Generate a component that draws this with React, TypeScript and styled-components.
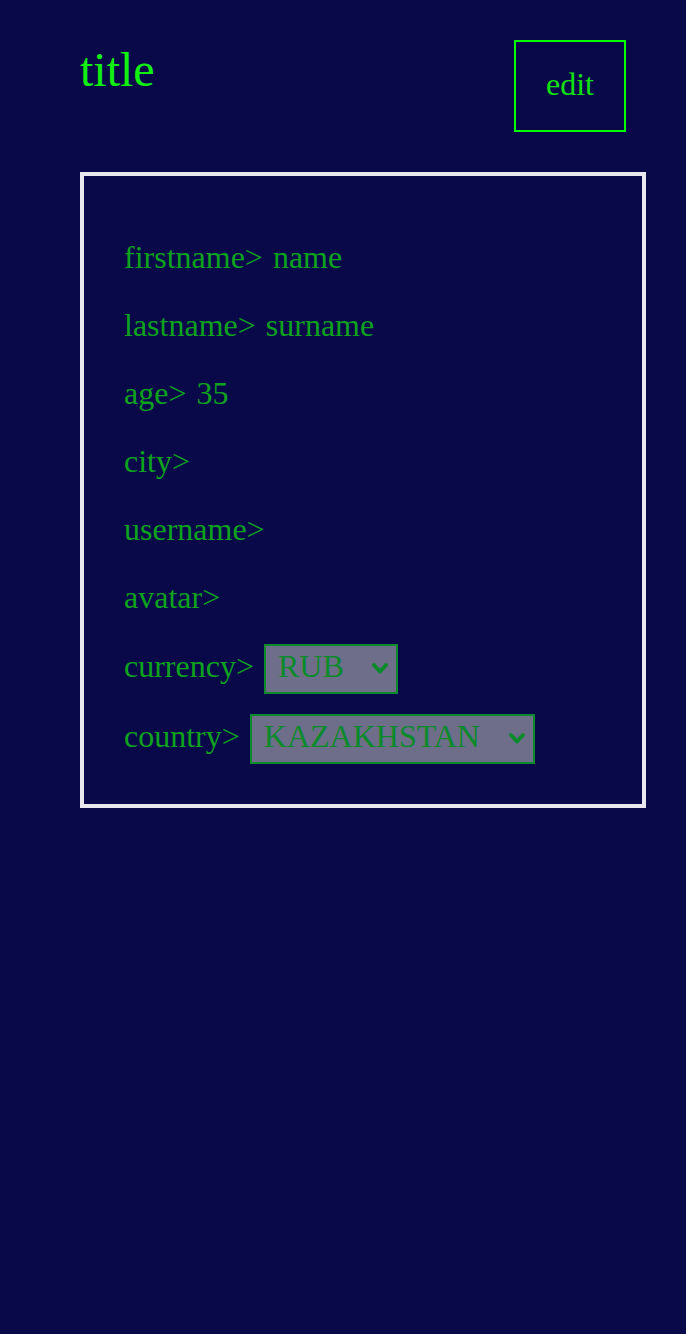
import * as React from 'react';
import styled, { createGlobalStyle } from 'styled-components';

const GlobalStyle = createGlobalStyle`
  html, body {
    margin: 0;
    padding: 0;
    background: #090949;
  }
  body {
    font-family: "Liberation Serif", "Times New Roman", serif;
  }
`;

const Page = styled.div`
  min-height: 1334px;
  padding: 40px 40px 40px 80px;
  box-sizing: border-box;
  background: #090949;
`;

const Header = styled.div`
  display: flex;
  justify-content: space-between;
  align-items: flex-start;
  padding-right: 20px;
`;

const Title = styled.h1`
  margin: 2px 0 0;
  font-size: 48px;
  font-weight: 400;
  line-height: normal;
  color: #11f011;
`;

const EditButton = styled.button`
  box-sizing: border-box;
  width: 112px;
  height: 92px;
  margin: 0;
  padding: 0 0 4px;
  background: transparent;
  border: 2px solid #00ff00;
  color: #11e011;
  font-family: inherit;
  font-size: 32px;
  cursor: pointer;
`;

const Card = styled.div`
  margin-top: 40px;
  border: 4px solid #e8e8ee;
  padding: 63px 40px 40px;
`;

const Row = styled.div<{ $top: number }>`
  padding-top: ${p => p.$top}px;
  font-size: 32px;
  line-height: normal;
  color: #0ea21e;
`;

const Label = styled.span`
  margin-right: 10px;
`;

const SelectWrap = styled.span`
  position: relative;
  display: inline-block;
  vertical-align: baseline;
`;

const Select = styled.select`
  appearance: none;
  box-sizing: border-box;
  height: 50px;
  margin: 0;
  padding: 0 52px 6px 12px;
  border: 2px solid #0b8a2b;
  border-radius: 0;
  background: #6e6e8a;
  color: #0b8a2b;
  font-family: inherit;
  font-size: 32px;
  vertical-align: baseline;
`;

const Chevron = styled.svg`
  position: absolute;
  right: 9px;
  top: 50%;
  width: 18px;
  height: 13px;
  margin-top: -7px;
  pointer-events: none;
`;

const Dropdown = ({ value, options, onChange }: { value: string; options: string[]; onChange: (v: string) => void }) => (
  <SelectWrap>
    <Select value={value} onChange={e => onChange(e.target.value)}>
      {options.map(o => <option key={o} value={o}>{o}</option>)}
    </Select>
    <Chevron viewBox="0 0 18 13">
      <polyline points="3,3 9,9.5 15,3" fill="none" stroke="#0b8a2b" strokeWidth="4" strokeLinecap="round" strokeLinejoin="round" />
    </Chevron>
  </SelectWrap>
);

const fields = [
  { label: 'firstname', value: 'name' },
  { label: 'lastname', value: 'surname' },
  { label: 'age', value: '35' },
  { label: 'city', value: '' },
  { label: 'username', value: '' },
  { label: 'avatar', value: '' },
];

const currencies = ['RUB', 'EUR', 'USD'];
const countries = ['RUSSIA', 'BELARUS', 'UKRAINE', 'KAZAKHSTAN', 'ARMENIA'];

const App = () => {
  const [currency, setCurrency] = React.useState('RUB');
  const [country, setCountry] = React.useState('KAZAKHSTAN');

  return (
    <Page>
      <GlobalStyle />
      <Header>
        <Title>title</Title>
        <EditButton>edit</EditButton>
      </Header>
      <Card>
        {fields.map((f, i) => (
          <Row key={f.label} $top={i === 0 ? 0 : 31}>
            <Label>{f.label}&gt;</Label>{f.value}
          </Row>
        ))}
        <Row $top={28}>
          <Label>currency&gt;</Label>
          <Dropdown value={currency} options={currencies} onChange={setCurrency} />
        </Row>
        <Row $top={20}>
          <Label>country&gt;</Label>
          <Dropdown value={country} options={countries} onChange={setCountry} />
        </Row>
      </Card>
    </Page>
  );
};

export default App;
